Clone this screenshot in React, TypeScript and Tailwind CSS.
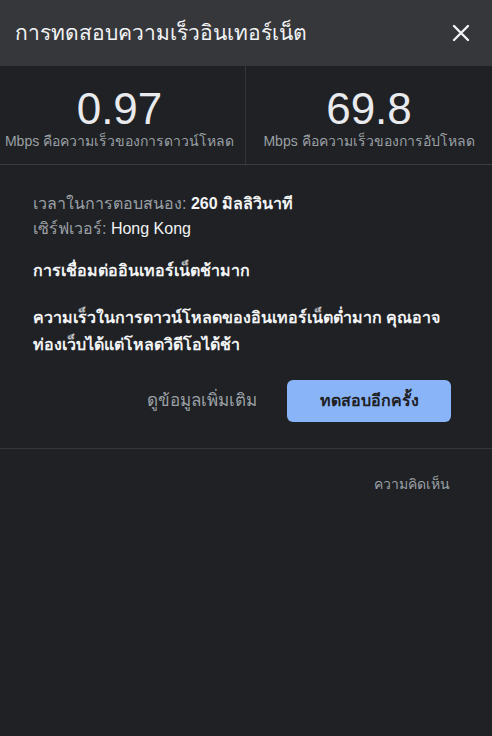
import React from "react";

const Metric = ({ value, label, className }: { value: string; label: string; className?: string }) => (
  <div className={`flex flex-col items-center justify-center pt-[6px] ${className ?? ""}`}>
    <div className="text-[44px] leading-[46px] text-[#e8eaed]">{value}</div>
    <div className="text-[14px] leading-[18px] text-[#9aa0a6]">{label}</div>
  </div>
);

const App = () => {
  return (
    <div
      className="w-[492px] h-[736px] bg-[#202124] text-[#e8eaed] overflow-hidden"
      style={{ fontFamily: '"Liberation Sans", "Noto Sans", sans-serif' }}
    >
      <div className="h-[66px] bg-[#36373b] flex items-center justify-between pl-[15px] pr-[22px]">
        <h1 className="text-[21px] text-[#f1f3f4]">การทดสอบความเร็วอินเทอร์เน็ต</h1>
        <svg width="18" height="18" viewBox="0 0 18 18" className="text-[#f1f3f4]">
          <path d="M2 2 L16 16 M16 2 L2 16" stroke="currentColor" strokeWidth="2.4" strokeLinecap="round" />
        </svg>
      </div>

      <div className="flex h-[99px] border-b border-[#3c3d41]">
        <Metric className="w-[245px] pr-[6px]" value="0.97" label="Mbps คือความเร็วของการดาวน์โหลด" />
        <div className="w-px bg-[#34353a]" />
        <Metric className="flex-1" value="69.8" label="Mbps คือความเร็วของการอัปโหลด" />
      </div>

      <div className="px-[33px] pt-[26px] text-[16px]">
        <div className="leading-[25px]">
          <div>
            <span className="text-[#9aa0a6]">เวลาในการตอบสนอง: </span>
            <span className="font-bold text-[#f1f3f4]">260 มิลลิวินาที</span>
          </div>
          <div>
            <span className="text-[#9aa0a6]">เซิร์ฟเวอร์: </span>
            <span className="text-[#f1f3f4]">Hong Kong</span>
          </div>
        </div>
        <p className="mt-[17px] leading-[25px] font-bold text-[#f1f3f4]">การเชื่อมต่ออินเทอร์เน็ตช้ามาก</p>
        <p className="mt-[21px] leading-[27px] font-bold text-[#f1f3f4]">
          ความเร็วในการดาวน์โหลดของอินเทอร์เน็ตต่ำมาก คุณอาจท่องเว็บได้แต่โหลดวิดีโอได้ช้า
        </p>
      </div>

      <div className="flex items-center justify-end gap-[30px] pr-[41px] mt-[22px] h-[42px]">
        <button className="text-[17px] text-[#9aa0a6]">ดูข้อมูลเพิ่มเติม</button>
        <button className="h-[42px] w-[164px] rounded-[6px] bg-[#8ab4f8] text-[#202124] text-[16px] font-bold">
          ทดสอบอีกครั้ง
        </button>
      </div>

      <div className="mt-[26px] border-t border-[#36373b]" />

      <div className="flex justify-end pr-[42px] pt-[25px]">
        <span className="text-[14px] text-[#9aa0a6]">ความคิดเห็น</span>
      </div>
    </div>
  );
};

export default App;
